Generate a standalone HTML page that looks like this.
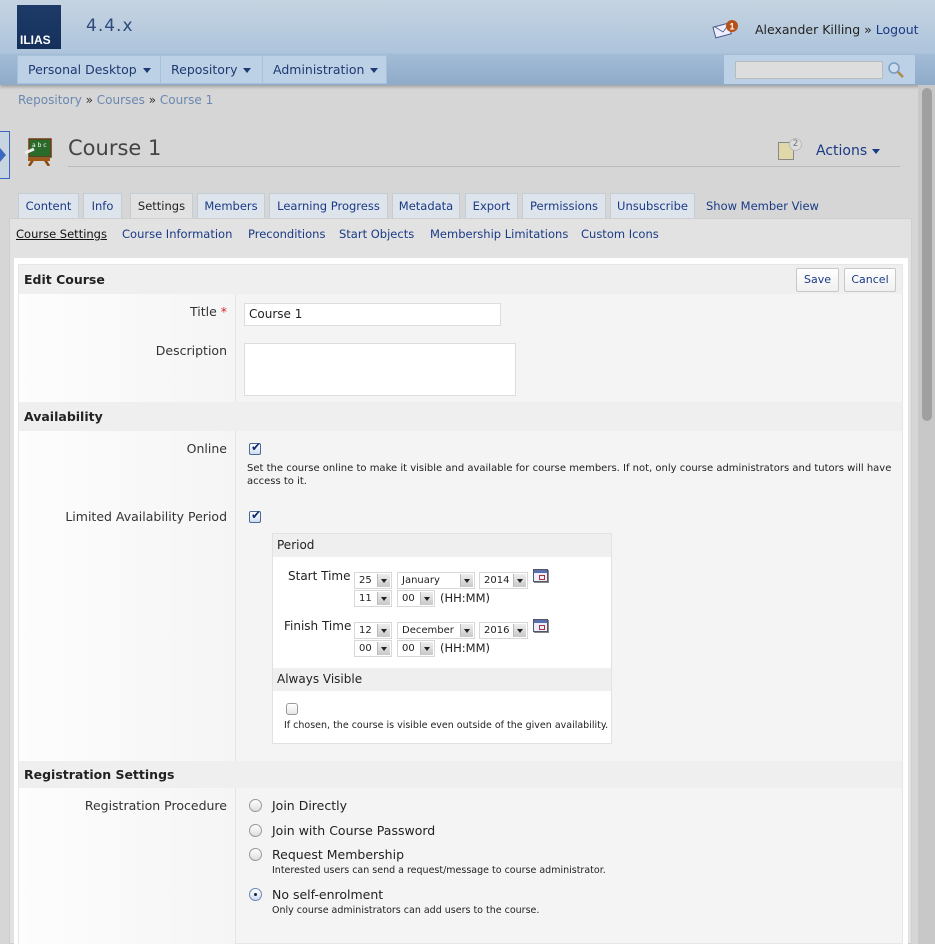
<!DOCTYPE html>
<html><head><meta charset="utf-8"><style>
*{box-sizing:border-box;margin:0;padding:0}
body{width:935px;height:944px;overflow:hidden;background:#d6d6d6;font-family:"DejaVu Sans","Liberation Sans",sans-serif;font-size:11.5px;color:#222;position:relative}
.a{position:absolute}
a,.lk{color:#1a3a86;text-decoration:none}
#hdr{left:0;top:0;width:935px;height:54px;background:linear-gradient(#c6d4e1,#adc4dc)}
#nav{left:0;top:54px;width:935px;height:31px;background:linear-gradient(#a3bcd6,#8eabc9);box-shadow:0 2px 3px rgba(0,0,0,.25)}
.ni{top:55px;height:29px;background:#bcd0e6;border:1px solid #a7c0dc;color:#1f3a70;font-size:12.5px;line-height:27px;padding-left:10px}
.caret{display:inline-block;width:0;height:0;border-left:4px solid transparent;border-right:4px solid transparent;border-top:5px solid #1f3a70;vertical-align:middle;margin-left:6px}
.tab{top:193px;height:25px;background:#dde4ec;border:1px solid #c4ccd6;border-bottom:none;color:#1a3a86;line-height:24px;text-align:center;font-size:11.5px}
.sub{top:227px;color:#1a3a86;font-size:11.5px}
.lbl{right:708px;text-align:right;color:#333;font-size:12.5px}
.sec{left:19px;width:883px;background:#efefef;font-weight:bold;font-size:12.5px;padding-left:5px;color:#222}
.sel{height:17px;border:1px solid #d8d8d8;background:#fff;font-size:10px;line-height:15px;padding-left:4px;color:#222}
.sel i{position:absolute;right:1px;top:1px;width:13px;height:13px;background:linear-gradient(#eee,#c8c8c8);border-left:1px solid #bbb}
.sel i:after{content:"";position:absolute;left:3px;top:5px;border-left:3.5px solid transparent;border-right:3.5px solid transparent;border-top:4px solid #222}
.cal{width:15px;height:13px;border:1px solid #556;background:#eef;box-shadow:1px 1px 0 #888}
.cal:before{content:"";position:absolute;left:0;top:0;width:13px;height:3px;background:#5a6fb0}
.cal:after{content:"";position:absolute;left:5px;top:5px;width:4px;height:3px;border:1px solid #a33}
.cb{width:12px;height:12px;border:1px solid #4a6a9a;border-radius:2px;background:linear-gradient(#fff,#cfdcef)}
.cb:after{content:"✔";position:absolute;left:1px;top:-4px;font-size:12px;color:#0c2a6a}
.rd{width:13px;height:13px;border:1px solid #9a9a9a;border-radius:50%;background:linear-gradient(#fff,#ddd)}
.rt{font-size:12.5px;color:#222}
.sm{font-size:10px;color:#222}
</style></head><body>
<div id="hdr" class="a"></div>
<div class="a" style="left:17px;top:5px;width:44px;height:44px;background:linear-gradient(#1e3a68,#14305a);color:#fff;font-family:'Liberation Sans',sans-serif;font-weight:bold;font-size:12px;padding:28px 0 0 3px">ILIAS</div>
<div class="a" style="left:86px;top:16px;font-size:17px;color:#2c4a7a;letter-spacing:1px">4.4.x</div>
<svg class="a" style="left:712px;top:18px" width="30" height="22"><rect x="2" y="7" width="16" height="11" fill="#eef" stroke="#4a5a8a" transform="rotate(-15 10 12)"/><path d="M3 9 L11 14 L18 5" fill="none" stroke="#4a5a8a" stroke-width=".8"/><circle cx="20" cy="8" r="6" fill="#b8501a"/><text x="17.5" y="11.5" font-size="9" font-weight="bold" fill="#fff" font-family="Liberation Sans">1</text></svg>
<div class="a" style="left:755px;top:22px;font-size:12.5px;color:#222">Alexander Killing » <span class="lk">Logout</span></div>
<div id="nav" class="a"></div>
<div class="a ni" style="left:17px;width:144px">Personal Desktop<span class="caret"></span></div>
<div class="a ni" style="left:160px;width:103px">Repository<span class="caret"></span></div>
<div class="a ni" style="left:262px;width:125px">Administration<span class="caret"></span></div>
<div class="a" style="left:724px;top:55px;width:191px;height:29px;background:#bcd0e6"></div>
<div class="a" style="left:735px;top:61px;width:148px;height:18px;background:#ddd;border:1px solid #bbb"></div>
<svg class="a" style="left:887px;top:61px" width="18" height="18"><circle cx="7" cy="7" r="5" fill="#cde" stroke="#7a9ac0" stroke-width="1.5"/><path d="M11 11 L16 16" stroke="#b08a4a" stroke-width="2.5"/></svg>
<div class="a" style="left:918px;top:85px;width:17px;height:859px;background:#c8c8c8"></div>
<div class="a" style="left:922px;top:88px;width:10px;height:333px;background:#a0a0a0;border-radius:5px"></div>
<div class="a" style="left:18px;top:93px;color:#6a88b0;font-size:12px">Repository <span style="color:#333">»</span> Courses <span style="color:#333">»</span> Course 1</div>
<div class="a" style="left:-1px;top:131px;width:11px;height:48px;border:1px solid #3a6ac0;background:#c8d4e0"></div>
<div class="a" style="left:0;top:148px;border-top:7px solid transparent;border-bottom:7px solid transparent;border-left:6px solid #3a6ac0"></div>
<svg class="a" style="left:24px;top:136px" width="32" height="30"><path d="M9 24 L5 30 M21 24 L25 30" stroke="#8a4a10" stroke-width="2.5"/><rect x="4" y="22" width="22" height="3" fill="#a05818"/><rect x="5" y="3" width="22" height="18" fill="#2a6a2a" stroke="#6a3a10" stroke-width="1.5"/><text x="8" y="11" font-size="6" fill="#fff">a b c</text><path d="M1 17 L10 13" stroke="#eee" stroke-width="3"/></svg>
<div class="a" style="left:68px;top:136px;font-size:21px;color:#444">Course 1</div>
<div class="a" style="left:68px;top:166px;width:832px;height:1px;background:#bbb"></div>
<div class="a" style="left:778px;top:142px;width:16px;height:18px;background:#e0d8a8;border:1px solid #888"></div>
<div class="a" style="left:789px;top:138px;width:13px;height:13px;border-radius:50%;background:#ddd;border:1px solid #bbb;font-size:9px;color:#777;text-align:center;line-height:11px">2</div>
<div class="a" style="left:816px;top:143px;color:#1a3a86;font-size:14px">Actions<span class="caret" style="border-top-color:#1a3a86;margin-left:5px"></span></div>
<div class="a tab" style="left:18px;width:61px">Content</div>
<div class="a tab" style="left:83px;width:39px">Info</div>
<div class="a tab" style="left:130px;width:63px;height:26px;top:193px;background:#e2e2e2;color:#222">Settings</div>
<div class="a tab" style="left:197px;width:68px">Members</div>
<div class="a tab" style="left:269px;width:119px">Learning Progress</div>
<div class="a tab" style="left:392px;width:68px">Metadata</div>
<div class="a tab" style="left:465px;width:53px">Export</div>
<div class="a tab" style="left:522px;width:84px">Permissions</div>
<div class="a tab" style="left:610px;width:85px">Unsubscribe</div>
<div class="a" style="left:706px;top:199px;color:#1a3a86;font-size:11.5px">Show Member View</div>
<div class="a" style="left:9px;top:218px;width:903px;height:726px;background:#e2e2e2;border:1px solid #cfcfcf"></div>
<div class="a sub" style="left:16px;color:#111;text-decoration:underline">Course Settings</div>
<div class="a sub" style="left:122px">Course Information</div>
<div class="a sub" style="left:248px">Preconditions</div>
<div class="a sub" style="left:339px">Start Objects</div>
<div class="a sub" style="left:430px">Membership Limitations</div>
<div class="a sub" style="left:581px">Custom Icons</div>
<div class="a" style="left:14px;top:258px;width:894px;height:686px;background:#fff"></div>
<div class="a" style="left:18px;top:264px;width:885px;height:680px;background:#f4f4f4;border:1px solid #e6e6e6"></div>
<div class="a" style="left:19px;top:294px;width:216px;height:650px;background:linear-gradient(90deg,#fdfdfd,#f5f5f5)"></div>
<div class="a" style="left:235px;top:294px;width:1px;height:650px;background:#e4e4e4"></div>
<div class="a sec" style="top:265px;height:29px;line-height:29px">Edit Course</div>
<div class="a" style="left:796px;top:268px;width:43px;height:24px;border:1px solid #c8c8c8;border-radius:2px;background:linear-gradient(#fff,#f0f0f0);color:#1a3a86;text-align:center;line-height:22px;font-size:11px">Save</div>
<div class="a" style="left:844px;top:268px;width:52px;height:24px;border:1px solid #c8c8c8;border-radius:2px;background:linear-gradient(#fff,#f0f0f0);color:#1a3a86;text-align:center;line-height:22px;font-size:11px">Cancel</div>
<div class="a lbl" style="top:304px">Title <span style="color:#d22">*</span></div>
<div class="a" style="left:244px;top:303px;width:257px;height:23px;background:#fff;border:1px solid #ddd;font-size:12px;line-height:21px;padding-left:4px">Course 1</div>
<div class="a lbl" style="top:343px">Description</div>
<div class="a" style="left:244px;top:343px;width:272px;height:53px;background:#fff;border:1px solid #ddd"></div>
<div class="a sec" style="top:402px;height:29px;line-height:29px;width:883px">Availability</div>
<div class="a" style="left:235px;top:431px;width:1px;height:330px;background:#e4e4e4"></div>
<div class="a lbl" style="top:441px">Online</div>
<div class="a cb" style="left:249px;top:443px"></div>
<div class="a sm" style="left:247px;top:462px;width:650px;line-height:13px">Set the course online to make it visible and available for course members. If not, only course administrators and tutors will have access to it.</div>
<div class="a lbl" style="top:509px">Limited Availability Period</div>
<div class="a cb" style="left:249px;top:511px"></div>
<div class="a" style="left:272px;top:533px;width:340px;height:211px;background:#fff;border:1px solid #e2e2e2"></div>
<div class="a" style="left:273px;top:534px;width:338px;height:23px;background:#efefef;font-size:12px;line-height:23px;padding-left:4px">Period</div>
<div class="a" style="left:288px;top:569px;font-size:12px">Start Time</div>
<div class="a sel" style="left:354px;top:572px;width:38px">25<i></i></div>
<div class="a sel" style="left:397px;top:572px;width:78px">January<i></i></div>
<div class="a sel" style="left:479px;top:572px;width:49px">2014<i></i></div>
<div class="a cal" style="left:533px;top:569px"></div>
<div class="a sel" style="left:354px;top:590px;width:38px">11<i></i></div>
<div class="a sel" style="left:397px;top:590px;width:38px">00<i></i></div>
<div class="a" style="left:440px;top:591px;font-size:11.5px">(HH:MM)</div>
<div class="a" style="left:284px;top:619px;font-size:12px">Finish Time</div>
<div class="a sel" style="left:354px;top:622px;width:38px">12<i></i></div>
<div class="a sel" style="left:397px;top:622px;width:78px">December<i></i></div>
<div class="a sel" style="left:479px;top:622px;width:49px">2016<i></i></div>
<div class="a cal" style="left:533px;top:619px"></div>
<div class="a sel" style="left:354px;top:640px;width:38px">00<i></i></div>
<div class="a sel" style="left:397px;top:640px;width:38px">00<i></i></div>
<div class="a" style="left:440px;top:641px;font-size:11.5px">(HH:MM)</div>
<div class="a" style="left:273px;top:668px;width:338px;height:23px;background:#efefef;font-size:12px;line-height:23px;padding-left:4px">Always Visible</div>
<div class="a" style="left:286px;top:703px;width:12px;height:12px;border:1px solid #999;border-radius:3px;background:linear-gradient(#fff,#e6e6e6)"></div>
<div class="a" style="left:284px;top:720px;font-size:9.5px">If chosen, the course is visible even outside of the given availability.</div>
<div class="a sec" style="top:761px;height:27px;line-height:27px">Registration Settings</div>
<div class="a lbl" style="top:798px">Registration Procedure</div>
<div class="a rd" style="left:249px;top:799px"></div><div class="a rt" style="left:272px;top:798px">Join Directly</div>
<div class="a rd" style="left:249px;top:824px"></div><div class="a rt" style="left:272px;top:823px">Join with Course Password</div>
<div class="a rd" style="left:249px;top:848px"></div><div class="a rt" style="left:272px;top:847px">Request Membership</div>
<div class="a sm" style="left:272px;top:865px;font-size:9.5px">Interested users can send a request/message to course administrator.</div>
<div class="a rd" style="left:249px;top:888px;border-color:#6a88b8;background:linear-gradient(#fff,#cfdcef)"></div><div class="a" style="left:254px;top:893px;width:3px;height:3px;border-radius:50%;background:#123"></div>
<div class="a rt" style="left:272px;top:887px">No self-enrolment</div>
<div class="a sm" style="left:272px;top:905px;font-size:9.5px">Only course administrators can add users to the course.</div>
</body></html>
